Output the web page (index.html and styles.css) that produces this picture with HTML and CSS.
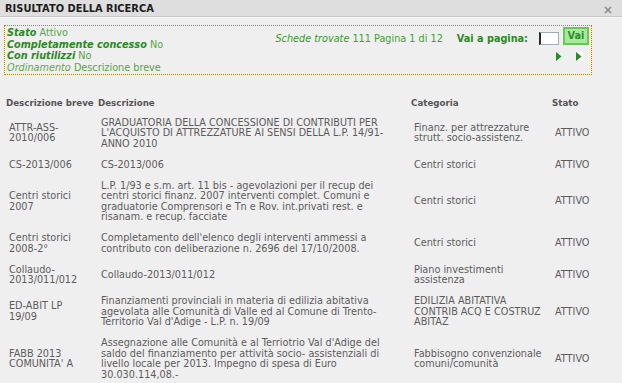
FILE: index.html
```html
<!DOCTYPE html>
<html lang="it">
<head>
<meta charset="utf-8">
<title>Risultato della ricerca</title>
<link rel="stylesheet" href="styles.css">
</head>
<body>
<div class="titlebar">
  <span class="title">RISULTATO DELLA RICERCA</span>
  <svg class="close" width="8" height="8" viewBox="0 0 8 8"><path d="M1 1L7 7M7 1L1 7" stroke="#8a8a8a" stroke-width="1.6" fill="none"/></svg>
</div>
<div class="content">
  <div class="filters">
    <div class="criteria">
      <div><b class="lbl">Stato</b> <span class="val">Attivo</span></div>
      <div><b class="lbl">Completamente concesso</b> <span class="val">No</span></div>
      <div><b class="lbl">Con riutilizzi</b> <span class="val">No</span></div>
      <div><i class="ord">Ordinamento</i> <span class="val">Descrizione breve</span></div>
    </div>
    <div class="pager">
      <div class="pager-row">
        <span class="count"><i>Schede trovate</i> 111 Pagina 1 di 12</span>
        <span class="goto">Vai a pagina:</span>
        <span class="pageinput"></span>
        <span class="vai">Vai</span>
      </div>
      <div class="arrows">
        <svg width="6" height="9" viewBox="0 0 6 9"><polygon points="0,0 5.5,4.5 0,9" fill="#1f8f1f"/></svg>
        <svg width="7" height="9" viewBox="0 0 7 9"><rect x="0" y="0" width="7" height="9" fill="#ffffff"/><polygon points="0,0 5.5,4.5 0,9" fill="#1f8f1f"/></svg>
      </div>
    </div>
  </div>

  <table class="results">
    <colgroup>
      <col class="c-breve"><col class="c-desc"><col class="c-cat"><col class="c-stato">
    </colgroup>
    <thead>
      <tr><th>Descrizione breve</th><th>Descrizione</th><th>Categoria</th><th>Stato</th></tr>
    </thead>
    <tbody>
      <tr>
        <td>ATTR-ASS-<br>2010/006</td>
        <td>GRADUATORIA DELLA CONCESSIONE DI CONTRIBUTI PER<br>L'ACQUISTO DI ATTREZZATURE AI SENSI DELLA L.P. 14/91-<br>ANNO 2010</td>
        <td>Finanz. per attrezzature<br>strutt. socio-assistenz.</td>
        <td>ATTIVO</td>
      </tr>
      <tr>
        <td>CS-2013/006</td>
        <td>CS-2013/006</td>
        <td>Centri storici</td>
        <td>ATTIVO</td>
      </tr>
      <tr>
        <td>Centri storici<br>2007</td>
        <td>L.P. 1/93 e s.m. art. 11 bis - agevolazioni per il recup dei<br>centri storici finanz. 2007 interventi complet. Comuni e<br>graduatorie Comprensori e Tn e Rov. int.privati rest. e<br>risanam. e recup. facciate</td>
        <td>Centri storici</td>
        <td>ATTIVO</td>
      </tr>
      <tr>
        <td>Centri storici<br>2008-2°</td>
        <td>Completamento dell'elenco degli interventi ammessi a<br>contributo con deliberazione n. 2696 del 17/10/2008.</td>
        <td>Centri storici</td>
        <td>ATTIVO</td>
      </tr>
      <tr>
        <td>Collaudo-<br>2013/011/012</td>
        <td>Collaudo-2013/011/012</td>
        <td>Piano investimenti<br>assistenza</td>
        <td>ATTIVO</td>
      </tr>
      <tr>
        <td>ED-ABIT LP<br>19/09</td>
        <td>Finanziamenti provinciali in materia di edilizia abitativa<br>agevolata alle Comunità di Valle ed al Comune di Trento-<br>Territorio Val d'Adige - L.P. n. 19/09</td>
        <td>EDILIZIA ABITATIVA<br>CONTRIB ACQ E COSTRUZ<br>ABITAZ</td>
        <td>ATTIVO</td>
      </tr>
      <tr>
        <td>FABB 2013<br>COMUNITA' A</td>
        <td>Assegnazione alle Comunità e al Terriotrio Val d'Adige del<br>saldo del finanziamento per attività socio- assistenziali di<br>livello locale per 2013. Impegno di spesa di Euro<br>30.030.114,08.-</td>
        <td>Fabbisogno convenzionale<br>comuni/comunità</td>
        <td>ATTIVO</td>
      </tr>
    </tbody>
  </table>
</div>
</body>
</html>
```
FILE: styles.css
```css
html, body {
  margin: 0;
  padding: 0;
}
body {
  background: #efefef;
  font-family: "DejaVu Sans", Verdana, sans-serif;
  font-size: 9.7px;
  color: #5a5a5a;
  overflow: hidden;
}
.titlebar {
  height: 16px;
  background: #dedede;
  border-bottom: 1px solid #c6c6c6;
  box-shadow: 0 1px 0 #f7f7f7;
  display: flex;
  align-items: center;
  justify-content: space-between;
  padding: 0 10px 0 5px;
}
.title {
  font-weight: bold;
  font-size: 9.9px;
  color: #1c1c1c;
}
.close {
  display: block;
  margin-top: 3px;
}
.content {
  padding: 8px 0 0 4px;
}
.filters {
  width: 586px;
  border: 1px dotted #b8860b;
  display: flex;
  justify-content: space-between;
  line-height: 11.5px;
  padding: 1px 0;
}
.criteria {
  padding-left: 2px;
}
.lbl {
  font-style: italic;
  color: #2a8a1e;
}
.val {
  color: #55a640;
}
.ord {
  color: #5fa84a;
}
.pager {
  display: flex;
  flex-direction: column;
  align-items: flex-end;
  padding-right: 2px;
}
.pager-row {
  display: flex;
  align-items: flex-end;
  height: 18px;
}
.count {
  color: #44a035;
  margin-bottom: 1px;
}
.count i {
  color: #3a9a2c;
}
.goto {
  font-weight: bold;
  color: #2a8a1e;
  margin-left: 14px;
  margin-bottom: 1px;
}
.pageinput {
  width: 17px;
  height: 11px;
  background: #ffffff;
  border: 1px solid #a3abb6;
  border-left: 2px solid #2a2a2a;
  margin-left: 11px;
}
.vai {
  width: 22px;
  height: 14px;
  margin-left: 4px;
  background: #a6eb9a;
  border: 2px solid #6cc45c;
  color: #2c8c2c;
  font-weight: bold;
  text-align: center;
  line-height: 13px;
  align-self: flex-start;
}
.arrows {
  display: flex;
  gap: 14px;
  margin-top: 7px;
  margin-right: 6px;
}
.arrows svg {
  display: block;
}
.results {
  margin-top: 19px;
  border-collapse: collapse;
  table-layout: fixed;
  width: 596px;
  line-height: 10.5px;
}
.c-breve { width: 92px; }
.c-desc { width: 313px; }
.c-cat { width: 141px; }
.c-stato { width: 50px; }
.results th {
  text-align: left;
  font-weight: bold;
  font-size: 8.7px;
  color: #555555;
  padding: 4px 2px 4px 2px;
  white-space: nowrap;
}
.results td {
  padding: 5px 2px 5.5px 5px;
  vertical-align: middle;
  white-space: nowrap;
  color: #5c5c5c;
}
```
